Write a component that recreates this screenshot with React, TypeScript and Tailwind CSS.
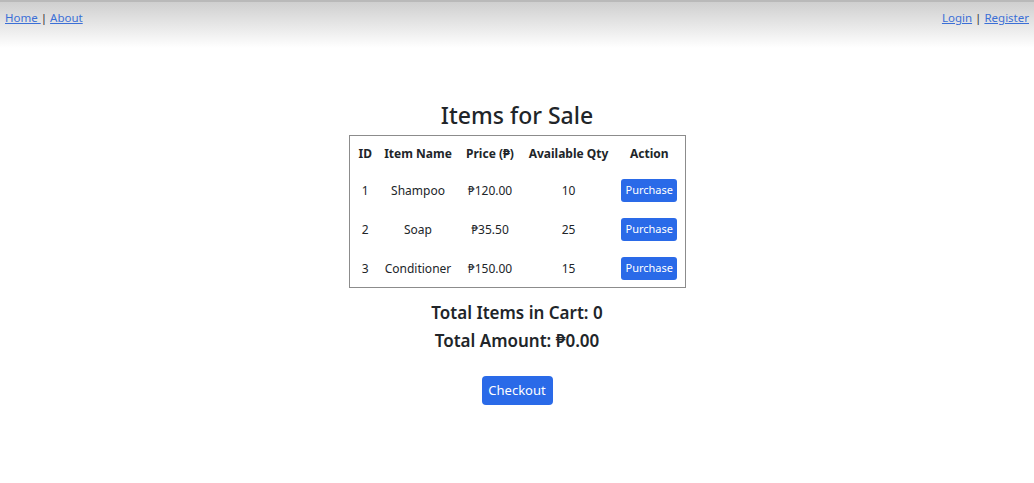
import React, { useState } from 'react';

interface Item {
  id: number;
  name: string;
  price: number;
  qty: number;
}

const items: Item[] = [
  { id: 1, name: 'Shampoo', price: 120, qty: 10 },
  { id: 2, name: 'Soap', price: 35.5, qty: 25 },
  { id: 3, name: 'Conditioner', price: 150, qty: 15 },
];

const peso = (n: number) => `₱${n.toFixed(2)}`;

const App = () => {
  const [cart] = useState<Item[]>([]);
  const total = cart.reduce((sum, i) => sum + i.price, 0);

  return (
    <div className="min-h-[483px] bg-white text-[#212529] font-['Noto_Sans','Open_Sans',sans-serif]">
      <nav className="flex h-[48px] justify-between border-t-2 border-[#b9b9b9] bg-gradient-to-b from-[#cfcfcf] to-white px-[5px] pt-[7px] text-[11.5px] text-[#3b6fd6]">
        <div>
          <a href="#" className="underline">Home </a>
          <span className="text-[#333]">|</span>{' '}
          <a href="#" className="underline">About</a>
        </div>
        <div>
          <a href="#" className="underline">Login</a>{' '}
          <span className="text-[#333]">|</span>{' '}
          <a href="#" className="underline">Register</a>
        </div>
      </nav>

      <main className="flex flex-col items-center pt-[53px]">
        <h2 className="mb-[5px] text-[23px] leading-[29px] font-medium">Items for Sale</h2>
        <table className="border border-[#8c8c8c] text-center text-[12px]">
          <thead>
            <tr className="h-[35px] font-bold">
              <th className="w-[30px] pl-[2px] pt-[2px]">ID</th>
              <th className="w-[78px] pt-[2px]">Item Name</th>
              <th className="w-[66px] pt-[2px]">Price (₱)</th>
              <th className="w-[91px] pt-[2px]">Available Qty</th>
              <th className="w-[71px] pt-[2px]">Action</th>
            </tr>
          </thead>
          <tbody>
            {items.map((item) => (
              <tr key={item.id} className="h-[39px]">
                <td className="pl-[2px] pt-[2px]">{item.id}</td>
                <td className="pt-[2px]">{item.name}</td>
                <td className="pt-[2px]">{peso(item.price)}</td>
                <td className="pt-[2px]">{item.qty}</td>
                <td className="pt-[1px]">
                  <button className="h-[23px] w-[56px] rounded-[3px] bg-[#2a6ae8] text-[11px] text-white">
                    Purchase
                  </button>
                </td>
              </tr>
            ))}
          </tbody>
        </table>

        <h4 className="mt-[11px] text-[17px] leading-[28px] font-semibold">
          Total Items in Cart: {cart.length}
        </h4>
        <h4 className="text-[17px] leading-[28px] font-semibold">Total Amount: {peso(total)}</h4>

        <button className="mt-[21px] h-[29px] w-[71px] rounded-[4px] bg-[#2a6ae8] text-[13px] text-white">
          Checkout
        </button>
      </main>
    </div>
  );
};

export default App;
